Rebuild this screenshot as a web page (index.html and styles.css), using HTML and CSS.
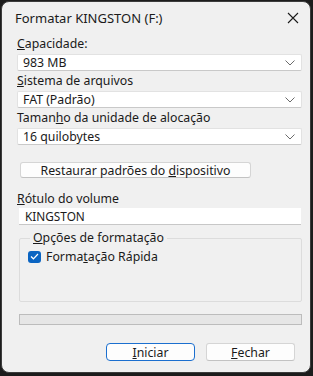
FILE: index.html
```html
<!DOCTYPE html>
<html lang="pt-BR">
<head>
    <meta charset="UTF-8">
    <meta name="viewport" content="width=device-width, initial-scale=1.0">
    <title>Formatar KINGSTON (F:)</title>
    <link rel="stylesheet" href="styles.css">
</head>
<body>
    <div class="window">
        <div class="titlebar">
            <span class="title">Formatar KINGSTON (F:)</span>
            <svg class="close" width="12" height="12" viewBox="0 0 12 12">
                <path d="M1 1 L11 11 M11 1 L1 11" stroke="#1b1b1b" stroke-width="1.1" fill="none"/>
            </svg>
        </div>

        <div class="content">
            <div class="label"><u>C</u>apacidade:</div>
            <div class="combo">
                <span>983 MB</span>
                <svg class="chev" width="10" height="6" viewBox="0 0 10 6"><path d="M0.5 0.5 L5 5 L9.5 0.5" stroke="#6b6b6b" fill="none"/></svg>
            </div>

            <div class="label"><u>S</u>istema de arquivos</div>
            <div class="combo">
                <span>FAT (Padrão)</span>
                <svg class="chev" width="10" height="6" viewBox="0 0 10 6"><path d="M0.5 0.5 L5 5 L9.5 0.5" stroke="#6b6b6b" fill="none"/></svg>
            </div>

            <div class="label">Taman<u>h</u>o da unidade de alocação</div>
            <div class="combo">
                <span>16 quilobytes</span>
                <svg class="chev" width="10" height="6" viewBox="0 0 10 6"><path d="M0.5 0.5 L5 5 L9.5 0.5" stroke="#6b6b6b" fill="none"/></svg>
            </div>

            <button class="btn restore">Restaurar padrões do <u>d</u>ispositivo</button>

            <div class="label volume-label"><u>R</u>ótulo do volume</div>
            <div class="textbox">KINGSTON</div>

            <fieldset class="group">
                <legend><u>O</u>pções de formatação</legend>
                <div class="check-row">
                    <span class="checkbox">
                        <svg width="9" height="7" viewBox="0 0 9 7"><path d="M1 3.5 L3.4 5.8 L8 1" stroke="#fff" stroke-width="1.2" fill="none"/></svg>
                    </span>
                    <span>Forma<u>t</u>ação Rápida</span>
                </div>
            </fieldset>

            <div class="progress"></div>

            <div class="actions">
                <button class="btn action primary"><u>I</u>niciar</button>
                <button class="btn action"><u>F</u>echar</button>
            </div>
        </div>
    </div>
</body>
</html>
```

FILE: styles.css
```css
* {
    box-sizing: border-box;
}

body {
    margin: 0;
    background: #1c1c1c;
    font-family: "Noto Sans", "Open Sans", sans-serif;
    font-size: 12.3px;
    color: #1a1a1a;
}

.window {
    margin: 1px 2px 0 1px;
    height: 372px;
    background: #f0f0f0;
    border: 1px solid #3c3c3c;
    border-radius: 8px;
    overflow: hidden;
}

.titlebar {
    height: 32px;
    display: flex;
    align-items: center;
    justify-content: space-between;
    padding: 0 11px 0 13px;
}

.title {
    font-size: 13px;
    color: #1b1b1b;
}

.content {
    padding: 0 8px 0 15px;
}

.label {
    height: 18px;
    line-height: 16px;
    margin-top: 2px;
}

.combo {
    height: 17px;
    background: #fff;
    border: 1px solid #e2e2e2;
    border-bottom-color: #c9c9c9;
    border-radius: 2px;
    display: flex;
    align-items: center;
    justify-content: space-between;
    padding: 0 6px 0 5px;
    margin-bottom: 1px;
}

.chev {
    margin-top: 1px;
}

.btn {
    font-family: inherit;
    font-size: 12.3px;
    color: #1a1a1a;
    background: #fdfdfd;
    border: 1px solid #d5d5d5;
    border-bottom-color: #c2c2c2;
    border-radius: 3px;
    padding: 0;
}

.restore {
    display: block;
    width: 231px;
    height: 16px;
    line-height: 13px;
    margin: 17px 0 0 3px;
}

.volume-label {
    height: 17px;
    margin-top: 13px;
}

.textbox {
    height: 17px;
    background: #fff;
    border-bottom: 1px solid #c7c7c7;
    margin: 0 1px 0 2px;
    padding: 0 6px;
    line-height: 16px;
    font-size: 11.8px;
}

.group {
    margin: 6px 0 0 2px;
    height: 71px;
    border: 1px solid #dcdcdc;
    border-radius: 2px;
    padding: 0 8px;
}

.group legend {
    padding: 0 3px;
    margin-left: 2px;
    line-height: 14px;
}

.check-row {
    display: flex;
    align-items: center;
    gap: 5px;
    margin-top: 3px;
}

.checkbox {
    width: 13px;
    height: 12px;
    border-radius: 3px;
    background: #0a64c2;
    display: flex;
    align-items: center;
    justify-content: center;
}

.progress {
    margin: 12px 0 0 2px;
    height: 11px;
    background: #e6e6e6;
    border: 1px solid #bcbcbc;
}

.actions {
    display: flex;
    justify-content: flex-end;
    gap: 11px;
    margin-top: 18px;
    padding-right: 7px;
}

.action {
    width: 89px;
    height: 18px;
    line-height: 15px;
}

.primary {
    border: 1px solid #1b6fcf;
    border-radius: 4px;
}
```
